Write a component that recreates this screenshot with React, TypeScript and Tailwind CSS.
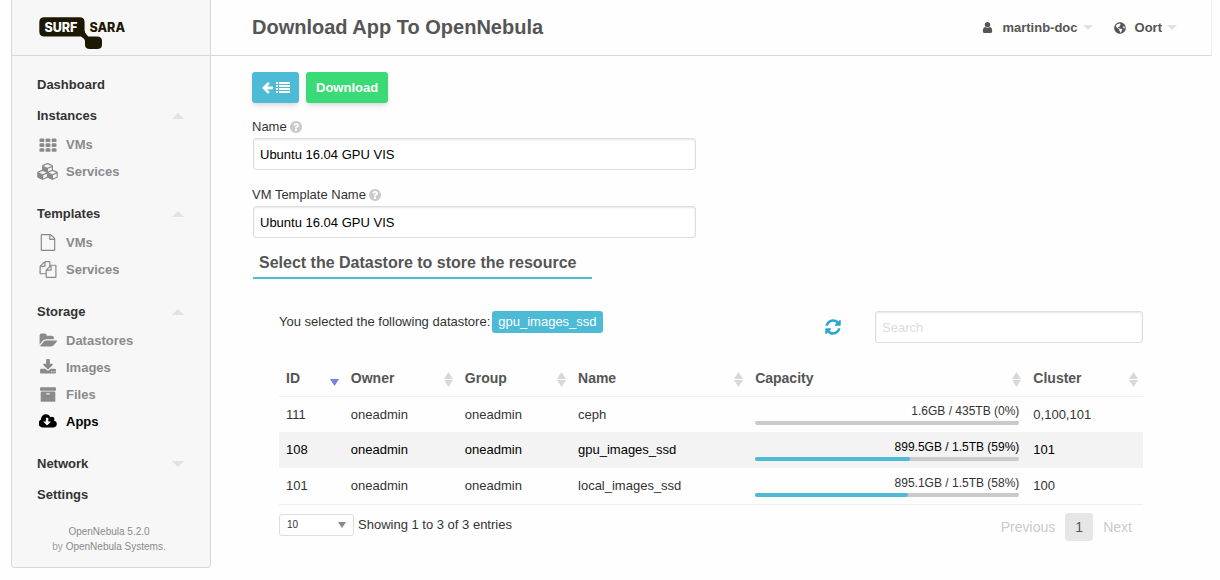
import React from "react";
import { FaGlobeAmericas } from "react-icons/fa";

const paths = {
  user: "M1536 1399q0 109-62.5 187t-150.5 78h-854q-88 0-150.5-78t-62.5-187q0-85 8.5-160.5t31.5-152 58.5-131 94-89 134.5-34.5q131 128 313 128t313-128q76 0 134.5 34.5t94 89 58.5 131 31.5 152 8.5 160.5zm-256-887q0 159-112.5 271.5t-271.5 112.5-271.5-112.5-112.5-271.5 112.5-271.5 271.5-112.5 271.5 112.5 112.5 271.5z",
  refresh: "M1639 1056q0 5-1 7-64 268-268 434.5t-478 166.5q-146 0-282.5-55t-243.5-157l-129 129q-19 19-45 19t-45-19-19-45v-448q0-26 19-45t45-19h448q26 0 45 19t19 45-19 45l-137 137q71 66 161 102t187 36q134 0 250-65t186-179q11-17 53-117 8-23 30-23h192q13 0 22.5 9.5t9.5 22.5zm25-800v448q0 26-19 45t-45 19h-448q-26 0-45-19t-19-45 19-45l138-138q-148-137-349-137-134 0-250 65t-186 179q-11 17-53 117-8 23-30 23h-199q-13 0-22.5-9.5t-9.5-22.5v-7q65-268 270-434.5t480-166.5q146 0 284 55.5t245 156.5l130-129q19-19 45-19t45 19 19 45z",
  arrowLeft: "M1664 896v128q0 53-32.5 90.5t-84.5 37.5h-704l293 294q38 36 38 90t-38 90l-75 76q-37 37-90 37-52 0-91-37l-651-652q-37-37-37-90 0-52 37-91l651-650q38-38 91-38 52 0 90 38l75 74q38 38 38 91t-38 91l-293 293h704q52 0 84.5 37.5t32.5 90.5z",
  list: "M0 1280h256v256h-256zM0 896h256v256h-256zM0 512h256v256h-256zM0 128h256v256h-256zM384 1280h1408v256h-1408zM384 896h1408v256h-1408zM384 512h1408v256h-1408zM384 128h1408v256h-1408z",
  question: "M1024 1376v-192q0-14-9-23t-23-9h-192q-14 0-23 9t-9 23v192q0 14 9 23t23 9h192q14 0 23-9t9-23zm256-672q0-88-55.5-163t-138.5-116-170-41q-243 0-371 213-15 24 8 42l132 100q7 6 19 6 16 0 25-12 53-68 86-92 34-24 86-24 48 0 85.5 26t37.5 59q0 38-20 61t-68 45q-63 28-115.5 86.5t-52.5 125.5v36q0 14 9 23t23 9h192q14 0 23-9t9-23q0-19 21.5-49.5t54.5-49.5q32-18 49-28.5t46-35 44.5-48 28-60.5 12.5-81zm384 192q0 209-103 385.5t-279.5 279.5-385.5 103-385.5-103-279.5-279.5-103-385.5 103-385.5 279.5-279.5 385.5-103 385.5 103 279.5 279.5 103 385.5z",
  archive: "M1088 832q0-26-19-45t-45-19h-256q-26 0-45 19t-19 45 19 45 45 19h256q26 0 45-19t19-45zm576-192v960q0 26-19 45t-45 19h-1408q-26 0-45-19t-19-45v-960q0-26 19-45t45-19h1408q26 0 45 19t19 45zm64-448v256q0 26-19 45t-45 19h-1536q-26 0-45-19t-19-45v-256q0-26 19-45t45-19h1536q26 0 45 19t19 45z",
  download: "M1344 1344q0-26-19-45t-45-19-45 19-19 45 19 45 45 19 45-19 19-45zm256 0q0-26-19-45t-45-19-45 19-19 45 19 45 45 19 45-19 19-45zm128-224v320q0 40-28 68t-68 28h-1472q-40 0-68-28t-28-68v-320q0-40 28-68t68-28h465l135 136q58 56 136 56t136-56l136-136h464q40 0 68 28t28 68zm-325-569q17 41-14 70l-448 448q-18 19-45 19t-45-19l-448-448q-31-29-14-70 17-39 59-39h256v-448q0-26 19-45t45-19h256q26 0 45 19t19 45v448h256q42 0 59 39z",
  folderOpen: "M1943 952q0 31-31 66l-336 396q-43 51-120.5 86.5t-143.5 35.5h-1088q-34 0-60.5-13t-26.5-43q0-31 31-66l336-396q43-51 120.5-86.5t143.5-35.5h1088q34 0 60.5 13t26.5 43zm-343-344v160h-832q-94 0-197 47.5t-164 119.5l-337 396-5 6q0-4-.5-12.5t-.5-12.5v-960q0-92 66-158t158-66h320q92 0 158 66t66 158v32h544q92 0 158 66t66 158z",
  cloudDownload: "M1216 928q0-14-9-23t-23-9h-224v-352q0-13-9.5-22.5t-22.5-9.5h-192q-13 0-22.5 9.5t-9.5 22.5v352h-224q-13 0-22.5 9.5t-9.5 22.5q0 14 9 23l352 352q9 9 23 9t23-9l351-351q10-12 10-24zm640 224q0 159-112.5 271.5t-271.5 112.5h-1088q-185 0-316.5-131.5t-131.5-316.5q0-130 70-240t188-165q-2-30-2-43 0-212 150-362t362-150q156 0 285.5 87t188.5 231q71-62 166-62 106 0 181 75t75 181q0 76-41 138 130 31 213.5 135.5t83.5 238.5z",
  cubes: "M640 1632l384-192v-314l-384 164v342zm-64-454l404-173-404-173-404 173zm1088 454l384-192v-314l-384 164v342zm-64-454l404-173-404-173-404 173zm-448-293l384-165v-266l-384 164v267zm-64-379l441-189-441-189-441 189zm1088 518v416q0 36-19 67t-52 47l-448 224q-25 14-57 14t-57-14l-448-224q-4-2-7-4-2 2-7 4l-448 224q-25 14-57 14t-57-14l-448-224q-33-16-52-47t-19-67v-416q0-38 21.5-70t56.5-48l434-186v-400q0-38 21.5-70t56.5-48l448-192q23-10 50-10t50 10l448 192q35 16 56.5 48t21.5 70v400l434 186q36 16 57 48t21 70z",
  file: "M1596 380q28 28 48 76t20 88v1152q0 40-28 68t-68 28h-1344q-40 0-68-28t-28-68v-1600q0-40 28-68t68-28h896q40 0 88 20t76 48zm-444-244v376h376q-10-29-22-41l-313-313q-12-12-41-22zm384 1528v-1024h-416q-40 0-68-28t-28-68v-416h-768v1536h1280z",
  files: "M1696 384q40 0 68 28t28 68v1216q0 40-28 68t-68 28h-960q-40 0-68-28t-28-68v-288h-544q-40 0-68-28t-28-68v-672q0-40 20-88t48-76l408-408q28-28 76-48t88-20h416q40 0 68 28t28 68v328q68-40 128-40h416zm-544 213l-299 299h299v-299zm-640-384l-299 299h299v-299zm196 647l316-316v-416h-384v416q0 40-28 68t-68 28h-416v640h512v-256q0-40 20-88t48-76zm956 804v-1152h-384v416q0 40-28 68t-68 28h-416v640h896z",
  grid: "M96 256h320q96 0 96 96v192q0 96-96 96h-320q-96 0-96-96v-192q0-96 96-96zM736 256h320q96 0 96 96v192q0 96-96 96h-320q-96 0-96-96v-192q0-96 96-96zM1376 256h320q96 0 96 96v192q0 96-96 96h-320q-96 0-96-96v-192q0-96 96-96zM96 768h320q96 0 96 96v192q0 96-96 96h-320q-96 0-96-96v-192q0-96 96-96zM736 768h320q96 0 96 96v192q0 96-96 96h-320q-96 0-96-96v-192q0-96 96-96zM1376 768h320q96 0 96 96v192q0 96-96 96h-320q-96 0-96-96v-192q0-96 96-96zM96 1280h320q96 0 96 96v192q0 96-96 96h-320q-96 0-96-96v-192q0-96 96-96zM736 1280h320q96 0 96 96v192q0 96-96 96h-320q-96 0-96-96v-192q0-96 96-96zM1376 1280h320q96 0 96 96v192q0 96-96 96h-320q-96 0-96-96v-192q0-96 96-96z",
};

type IconName = keyof typeof paths;

const viewWidths: Partial<Record<IconName, number>> = {
  cubes: 2176,
  folderOpen: 1943,
  cloudDownload: 1856,
};

function Icon({ name, className }: { name: IconName; className: string }) {
  return (
    <svg viewBox={`0 0 ${viewWidths[name] ?? 1792} 1792`} className={className} fill="currentColor" aria-hidden="true">
      <path d={paths[name]} />
    </svg>
  );
}

function Triangle({ up = false, className }: { up?: boolean; className: string }) {
  return (
    <svg viewBox="0 0 12 6" preserveAspectRatio="none" className={className} fill="currentColor" aria-hidden="true">
      <path d={up ? "M0 6L6 0L12 6Z" : "M0 0H12L6 6Z"} />
    </svg>
  );
}

function Logo() {
  return (
    <svg viewBox="0 0 88 34" className="h-[34px] w-[88px]" role="img" aria-label="SURF SARA">
      <path
        fill="#1d1804"
        d="M5.3 1.3H40.6Q45.6 1.3 45.6 6.3V14.5Q45.6 17.5 49.2 20.4H58Q63 20.4 63 25V28.4Q63 33 58 33H51Q46 33 46 28.4V25Q45.6 22.5 42 20.4H5.3Q0.3 20.4 0.3 15.4V6.3Q0.3 1.3 5.3 1.3Z"
      />
      <g fontFamily="Inter, sans-serif" fontWeight="800" fontSize="12.5">
        <text x="5.5" y="15.7" fill="#ffffff">SURF</text>
        <text x="50.5" y="15.7" fill="#1d1804">SARA</text>
      </g>
    </svg>
  );
}

interface Section {
  title: string;
  arrow?: "up" | "down";
  items: { label: string; icon: IconName; active?: boolean }[];
}

const sections: Section[] = [
  { title: "Dashboard", items: [] },
  {
    title: "Instances",
    arrow: "up",
    items: [
      { label: "VMs", icon: "grid" },
      { label: "Services", icon: "cubes" },
    ],
  },
  {
    title: "Templates",
    arrow: "up",
    items: [
      { label: "VMs", icon: "file" },
      { label: "Services", icon: "files" },
    ],
  },
  {
    title: "Storage",
    arrow: "up",
    items: [
      { label: "Datastores", icon: "folderOpen" },
      { label: "Images", icon: "download" },
      { label: "Files", icon: "archive" },
      { label: "Apps", icon: "cloudDownload", active: true },
    ],
  },
  { title: "Network", arrow: "down", items: [] },
  { title: "Settings", items: [] },
];

function Sidebar() {
  return (
    <aside className="w-[200px] shrink-0 self-start rounded-b border border-t-0 border-[#d8d8d8] bg-[#f7f7f7]">
      <div className="flex h-14 items-start border-b border-[#d8d8d8] pt-4 pl-[27px]">
        <Logo />
      </div>
      <nav className="pt-[13px] text-[13px] font-bold">
        {sections.map((s) => (
          <div key={s.title} className={s.items.length ? "pb-[13px]" : ""}>
            <a href="#" className="flex h-[31px] items-center justify-between pr-[26px] pl-[25px] text-[#333333]">
              {s.title}
              {s.arrow && <Triangle up={s.arrow === "up"} className="h-[6px] w-3 text-[#e2e2e2]" />}
            </a>
            {s.items.map((item) => (
              <a
                key={item.label}
                href="#"
                className={`flex h-[27px] items-center gap-2 pl-[25px] ${item.active ? "text-black" : "text-[#8a8a8a]"}`}
              >
                <span className="flex w-[21px] justify-center">
                  <Icon name={item.icon} className={item.icon === "cubes" ? "h-[17px] w-[21px]" : "h-[17px] w-[18px]"} />
                </span>
                {item.label}
              </a>
            ))}
          </div>
        ))}
      </nav>
      <footer className="pt-[14px] pr-1 pb-[13px] text-center text-[10px] leading-[15px] text-[#8a8a8a]">
        OpenNebula 5.2.0
        <br />
        <span className="text-[#a0a0a0]">by</span> <a href="#">OpenNebula Systems.</a>
      </footer>
    </aside>
  );
}

function Field({ id, label }: { id: string; label: string }) {
  return (
    <div>
      <label htmlFor={id} className="flex h-[23px] items-center gap-[2px] text-[13px] text-[#333333]">
        {label}
        <Icon name="question" className="size-[14px] text-[#cacaca]" />
      </label>
      <input
        id={id}
        defaultValue="Ubuntu 16.04 GPU VIS"
        className="ml-px block h-8 w-full rounded-[3px] border border-[#dddddd] bg-white px-[6px] text-[13px] text-black shadow-[inset_0_1px_2px_rgba(10,10,10,0.1)]"
      />
    </div>
  );
}

const columns = [
  { label: "ID", width: "w-[7.5%]" },
  { label: "Owner", width: "w-[13.2%]" },
  { label: "Group", width: "w-[13.1%]" },
  { label: "Name", width: "w-[20.5%]" },
  { label: "Capacity", width: "w-[32.2%]" },
  { label: "Cluster", width: "w-[13.5%]" },
];

const rows = [
  { id: "111", name: "ceph", capacity: "1.6GB / 435TB (0%)", percent: 0, cluster: "0,100,101" },
  { id: "108", name: "gpu_images_ssd", capacity: "899.5GB / 1.5TB (59%)", percent: 58.5, cluster: "101", selected: true },
  { id: "101", name: "local_images_ssd", capacity: "895.1GB / 1.5TB (58%)", percent: 58, cluster: "100" },
];

function DatastoreTable() {
  return (
    <table className="mt-[17px] w-full table-fixed text-left text-[13px] text-[#333333]">
      <thead>
        <tr className="h-9 border-b border-[#eeeeee] text-sm text-[#555555]">
          {columns.map((c, i) => (
            <th key={c.label} scope="col" className={`${c.width} py-0 pr-[5px] pl-[7px] font-bold`}>
              <div className="flex items-center justify-between">
                {c.label}
                {i === 0 ? (
                  <Triangle className="mt-[10px] h-[7px] w-[9px] text-[#7b80e0]" />
                ) : (
                  <span className="flex flex-col gap-px pt-[3px] text-[#d8d8d8]">
                    <Triangle up className="h-[7px] w-[9px]" />
                    <Triangle className="h-[7px] w-[9px]" />
                  </span>
                )}
              </div>
            </th>
          ))}
        </tr>
      </thead>
      <tbody className="border-b border-[#eeeeee]">
        {rows.map((r) => (
          <tr key={r.id} className={`h-9 ${r.selected ? "bg-[#f3f3f3] text-black" : ""}`}>
            <td className="px-[7px] py-0">{r.id}</td>
            <td className="px-[7px] py-0">oneadmin</td>
            <td className="px-[7px] py-0">oneadmin</td>
            <td className="px-[7px] py-0">{r.name}</td>
            <td className="px-[7px] py-0">
              <div className="mb-[2px] text-right text-xs leading-4">{r.capacity}</div>
              <div className="h-1 rounded-sm bg-[#cacaca]">
                <div className="h-1 rounded-sm bg-[#4dbbd5]" style={{ width: `${r.percent}%` }} />
              </div>
            </td>
            <td className="px-[7px] py-0">{r.cluster}</td>
          </tr>
        ))}
      </tbody>
    </table>
  );
}

export default function App() {
  return (
    <div className="flex min-h-screen bg-[#fefefe] pr-2 pl-[11px] font-['Liberation_Sans',Arial,sans-serif]">
      <Sidebar />
      <div className="min-w-0 flex-1">
        <header className="flex h-14 items-center justify-between border-r border-b border-r-[#eeeeee] border-b-[#d8d8d8] pr-[34px] pl-[41px] text-[#555555]">
          <h1 className="pb-[2px] text-xl font-bold">Download App To OpenNebula</h1>
          <div className="flex gap-[21px] text-[13px] font-bold">
            <button className="flex items-center">
              <Icon name="user" className="mr-2 size-[13px]" />
              martinb-doc
              <Triangle className="ml-[5px] h-[5px] w-[10px] text-[#e2e2e2]" />
            </button>
            <button className="flex items-center">
              <FaGlobeAmericas className="mr-[9px] size-3" />
              Oort
              <Triangle className="ml-[5px] h-[5px] w-[10px] text-[#e2e2e2]" />
            </button>
          </div>
        </header>
        <main className="px-[41px] pt-4">
          <div className="flex gap-[7px] text-white">
            <button aria-label="Back to list" className="flex h-[31px] w-[47px] items-center justify-center gap-[2px] rounded-[3px] bg-[#4dbbd5] shadow-md">
              <Icon name="arrowLeft" className="size-[13px]" />
              <Icon name="list" className="size-[14px]" />
            </button>
            <button className="h-[31px] rounded-[3px] bg-[#3adb76] px-[10px] text-[13px] font-bold shadow-md">Download</button>
          </div>
          <form className="mt-3 flex w-[443px] max-w-full flex-col gap-[13px]">
            <Field id="name" label="Name" />
            <Field id="template" label="VM Template Name" />
          </form>
          <div className="pt-[13px] pl-px">
            <h2 className="inline-block border-b-2 border-[#4dbbd5] pr-4 pb-[2px] pl-[6px] text-base font-bold text-[#555555]">
              Select the Datastore to store the resource
            </h2>
          </div>
          <section className="pt-8 pr-7 pl-[27px]">
            <div className="flex justify-between">
              <p className="flex h-[22px] items-center gap-[2px] text-[13px] text-[#333333]">
                You selected the following datastore:
                <span className="rounded-[3px] bg-[#4dbbd5] px-[6px] leading-[22px] text-white">gpu_images_ssd</span>
              </p>
              <div className="flex items-center gap-[33px]">
                <button aria-label="Refresh" className="text-[#2ba6cb]">
                  <Icon name="refresh" className="size-[18px]" />
                </button>
                <input
                  aria-label="Search"
                  placeholder="Search"
                  className="h-8 w-[268px] rounded-[3px] border border-[#dddddd] bg-white px-[6px] text-[13px] shadow-[inset_0_1px_2px_rgba(10,10,10,0.1)] placeholder:text-[#dddddd]"
                />
              </div>
            </div>
            <DatastoreTable />
            <div className="flex items-start justify-between pt-2 text-[13px] text-[#333333]">
              <div className="flex items-center gap-1 pt-px">
                <div className="grid items-center">
                  <select aria-label="Entries per page" className="col-start-1 row-start-1 h-[22px] w-[75px] appearance-none rounded-[3px] border border-[#dddddd] bg-white pl-[7px] text-[10px]">
                    <option>10</option>
                  </select>
                  <Triangle className="pointer-events-none col-start-1 row-start-1 mr-2 h-[6px] w-2 justify-self-end text-[#888888]" />
                </div>
                Showing 1 to 3 of 3 entries
              </div>
              <div className="flex items-center pr-[11px] text-sm text-[#cacaca]">
                <button disabled>Previous</button>
                <button className="mx-[10px] size-7 rounded-[3px] bg-[#e6e6e6] text-[#555555]">1</button>
                <button disabled>Next</button>
              </div>
            </div>
          </section>
        </main>
      </div>
    </div>
  );
}
